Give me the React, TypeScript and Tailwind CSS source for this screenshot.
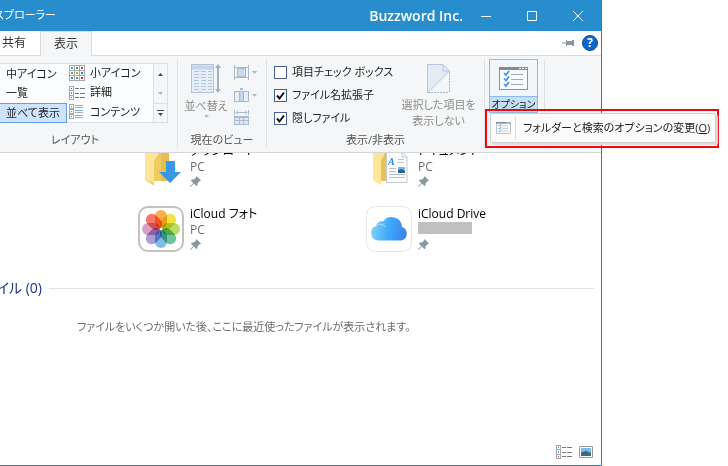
import type { ReactNode } from 'react';

function Pin({ flat = false }: { flat?: boolean }) {
  return flat ? (
    <svg width="12" height="8" viewBox="0 0 12 8" fill="#8b959e" aria-hidden="true">
      <path d="M0 3.5h4v1H0zM4 1h1v1h5V1h2v6h-2V6H5v1H4z" />
    </svg>
  ) : (
    <svg width="11" height="11" viewBox="0 0 11 11" fill="#8b979f" aria-hidden="true">
      <path d="M6.500 0 11 4.500 9.500 5.200 7.600 7.200 7.500 9.500 6.300 10 3.900 7.600.6 11 0 10.400 3.300 7 1 4.700 1.700 3.600 4 3.500 6 1.500z" />
    </svg>
  );
}

function Caret({ color = '#b3b8be' }: { color?: string }) {
  return (
    <svg width="5" height="3" viewBox="0 0 5 3" fill={color} aria-hidden="true">
      <path d="M0 0h5L2.500 3z" />
    </svg>
  );
}

function SmallIconsIcon() {
  const colors = ['#4f9be0', '#3f8f52', '#c9473c', '#6da85e', '#d0a030', '#3a70b8', '#3f80d0', '#4a9a4a', '#c2352a'];
  return (
    <svg width="16" height="16" viewBox="0 0 16 16" aria-hidden="true">
      {colors.map((c, i) => {
        const x = (i % 3) * 5;
        const y = Math.floor(i / 3) * 5;
        return (
          <g key={i}>
            <rect x={x + 0.5} y={y + 0.5} width="5" height="5" fill="#fff" stroke="#a5a9ae" />
            <rect x={x + 2} y={y + 2} width="2" height="2" fill={c} />
          </g>
        );
      })}
    </svg>
  );
}

function DetailsIcon() {
  return (
    <svg width="16" height="14" viewBox="0 0 16 14" aria-hidden="true">
      <rect x="0.5" y="0.5" width="4" height="13" fill="#fff" stroke="#a5a9ad" />
      <path d="M0 4.5h5M0 9.5h5" stroke="#a5a9ad" />
      <path fill="#3b6ea5" d="M2 2h1v1H2z" />
      <path fill="#3a9cf0" d="M2 6h1v2H2z" />
      <path fill="#d03030" d="M2 11h1v1H2z" />
      <path d="M6 2.5h4m1 0h5M6 7.5h4m1 0h5M6 11.5h4m1 0h5" stroke="#73777c" />
    </svg>
  );
}

function ContentsIcon() {
  return (
    <svg width="14" height="16" viewBox="0 0 14 16" aria-hidden="true">
      {['#4f9be0', '#5cae62', '#4f8fd6'].map((c, i) => (
        <g key={i}>
          <rect x="0.5" y={i * 5 + 0.5} width="4" height="4" fill="#fff" stroke="#a5a9ad" />
          <rect x="2" y={i * 5 + 2} width="1" height="1" fill={c} />
          <path d={`M6 ${i * 5 + 1.5}h8`} stroke="#7db0e6" />
          <path d={`M6 ${i * 5 + 3.5}h8`} stroke="#a9adb2" />
        </g>
      ))}
    </svg>
  );
}

function SortIcon() {
  return (
    <svg width="30" height="30" viewBox="0 0 30 30" aria-hidden="true">
      <rect x="0.5" y="0.5" width="22" height="28" fill="#e6eef8" stroke="#b4c3d9" />
      <path d="M1 3.5h21" stroke="#c5d4e8" strokeWidth="4" />
      {[7, 10, 13, 16, 19, 22, 25].map((y) => (
        <path key={y} d={`M3 ${y + 0.5}h5m2 0h5m2 0h4`} stroke="#b5c7df" />
      ))}
      <path d="M27 3v23" stroke="#9fb0c8" strokeWidth="2" />
      <path d="m27 0 3 4h-6zM27 29l3-4h-6z" fill="#9fb0c8" />
    </svg>
  );
}

function GroupIcon() {
  return (
    <svg width="15" height="15" viewBox="0 0 15 15" fill="none" stroke="#a9bad2" aria-hidden="true">
      <path d="M.5 0v15M14.5 0v15M1 2.5h13M1 12.5h13" />
      <rect x="3.5" y="3.5" width="8" height="8" fill="#cbd9eb" />
    </svg>
  );
}

function AddColumnsIcon() {
  return (
    <svg width="15" height="14" viewBox="0 0 15 14" fill="none" stroke="#a9bad2" aria-hidden="true">
      <rect x=".5" y="3.5" width="14" height="10" fill="#e6eef8" />
      <rect x="5.5" y="3.5" width="4" height="10" fill="#c5d4e8" />
      <path d="M7.5 0v2" strokeWidth="3" />
    </svg>
  );
}

function FitColumnsIcon() {
  return (
    <svg width="15" height="15" viewBox="0 0 15 15" fill="none" stroke="#a9bad2" aria-hidden="true">
      <path d="M.5 0v5M14.5 0v5M2 2.5h11M4 .5l-2 2 2 2M11 .5l2 2-2 2" />
      <rect x=".5" y="6.5" width="14" height="8" fill="#dde7f3" />
      <path d="M.5 7.5h14M.5 10.5h14M5.5 7v7M9.5 7v7" />
    </svg>
  );
}

function HideItemsIcon() {
  return (
    <svg width="24" height="30" viewBox="0 0 24 30" aria-hidden="true">
      <path d="M1 .5h15l6 6v1L1 28.5z" fill="#e3ebf5" />
      <path d="M.5 29V.5H16l6.5 6.5v1M1 28.5l21-21M16 .5V7h6.500" fill="none" stroke="#b8c8dd" />
      <path d="M22.500 8v21M1 28.500h21" stroke="#a3b7d3" strokeDasharray="2 1" />
    </svg>
  );
}

function OptionsIcon({ width, height }: { width: number; height: number }) {
  return (
    <svg width={width} height={height} viewBox="0 0 29 23" aria-hidden="true">
      <rect x=".5" y=".5" width="28" height="22" fill="#f8f9fb" stroke="#8f9499" />
      <path d="M0 0h29v3H0z" fill="#858a90" />
      <path d="M20 1h2v1h-2zm3 0h2v1h-2zm3 0h2v1h-2z" fill="#fff" />
      <path d="M12 7.500h12M12 12.500h12M12 17.500h12" stroke="#a5a9ad" />
      <path d="m5 6 2 2 3-4M5 11.500l2 2 3-4M5 17l2 2 3-4" fill="none" stroke="#3d8fdc" strokeWidth="1.600" />
    </svg>
  );
}

function DownloadsIcon() {
  return (
    <svg width="46" height="34" viewBox="0 0 46 34" aria-hidden="true">
      <path d="M16 0h15v28H16z" fill="#e5bd50" />
      <path d="M8 0h15v28H8z" fill="#efcb62" />
      <path d="M7 0h14l-5 8v24l-9-5z" fill="#ffe598" />
      <path d="m7 27 9 6v-4z" fill="#f4d477" />
      <path d="M28 8h9v11h6L32 30 21 19h7z" fill="#3b97e8" />
    </svg>
  );
}

function DocumentsIcon() {
  return (
    <svg width="46" height="34" viewBox="0 0 46 34" aria-hidden="true">
      <path d="M8 0h12v28H8z" fill="#e8c158" />
      <path d="M7 0h12l-4 8v24l-8-5z" fill="#ffe598" />
      <path d="M20.500 3.500V-1H36l5 5v25.500H20.500z" fill="#fbfcfd" stroke="#c5c9cd" />
      <path d="M36 0v4h5" fill="none" stroke="#c5c9cd" />
      <path d="M32 6.500h6M32 9.500h6M23 15.500h7M23 18.500h7M23 21.500h16M23 24.500h16" stroke="#b8c1c9" />
      <text x="22" y="12" fontSize="10" fontStyle="italic" fontWeight="700" fill="#2b8ad0" fontFamily="Liberation Serif, serif">A</text>
      <path d="M32 14h7v6h-7z" fill="#78b5e5" />
      <path d="m32 17 4-1 3 2v2h-7z" fill="#2b638f" />
    </svg>
  );
}

function PhotosIcon() {
  const petals = ['#f9a638', '#ece22c', '#b4d858', '#5fbd92', '#70b8e6', '#9c94d0', '#d696c2', '#f5685a'];
  return (
    <svg width="46" height="46" viewBox="0 0 46 46" aria-hidden="true">
      <rect x="1" y="1" width="44" height="44" rx="9" fill="#fff" stroke="#c2c2c2" strokeWidth="2" />
      {petals.map((c, i) => (
        <rect key={c} x="17" y="4" width="12" height="18" rx="6" fill={c} opacity="0.9" transform={`rotate(${i * 45} 23 23)`} className="mix-blend-multiply" />
      ))}
    </svg>
  );
}

function DriveIcon() {
  return (
    <svg width="46" height="46" viewBox="0 0 46 46" aria-hidden="true">
      <defs>
        <linearGradient id="cloud" x1="0" y1="0.500" x2="1" y2="0.600">
          <stop offset="0" stopColor="#7ed3fa" />
          <stop offset="0.500" stopColor="#3fa9f8" />
          <stop offset="1" stopColor="#3d7ff0" />
        </linearGradient>
      </defs>
      <rect x="0.500" y="0.500" width="45" height="45" rx="9" fill="#fff" stroke="#e6e6e6" />
      <path d="M12 34.500a7.500 7.500 0 0 1-2-14.500 5.500 5.500 0 0 1 7-4.500A10.500 10.500 0 0 1 36 21a7 7 0 0 1-1 13.500z" fill="url(#cloud)" />
      <path d="M10 20a5.500 5.500 0 0 1 9 1" fill="none" stroke="#a8e2fb" />
    </svg>
  );
}

function Group({ label, className, children }: { label: string; className: string; children: ReactNode }) {
  return (
    <section aria-label={label} className={`flex shrink-0 flex-col border-r border-[#dfe1e4] ${className}`}>
      <div className="flex h-[76px]">{children}</div>
      <div className="text-center leading-4 text-[#555]">{label}</div>
    </section>
  );
}

function Check({ label, checked }: { label: string; checked?: boolean }) {
  return (
    <label className="flex h-[23px] items-center gap-[5px] whitespace-nowrap text-[#222]">
      <span className="grid size-[13px]">
        <input type="checkbox" defaultChecked={checked} className="peer col-start-1 row-start-1 size-[13px] appearance-none border border-[#4a5f96] bg-white" />
        <svg viewBox="0 0 13 13" className="pointer-events-none invisible col-start-1 row-start-1 size-[13px] peer-checked:visible" aria-hidden="true">
          <path d="m3 6.500 2.500 3L10 3.500" fill="none" stroke="#111" strokeWidth="2" />
        </svg>
      </span>
      {label}
    </label>
  );
}

function Place({ name, sub, icon, hidden, clipped }: { name: string; sub?: string; icon: ReactNode; hidden?: boolean; clipped?: boolean }) {
  return (
    <li className={`flex gap-[6px] overflow-hidden ${clipped ? 'h-[34px] items-end' : 'h-[47px] items-start'}`}>
      {icon}
      <div className="flex flex-col whitespace-nowrap text-[12px] leading-4">
        <span className="text-black">{name}</span>
        {hidden ? <span className="mb-1 h-3 w-[54px] bg-[#c0c0c0]" /> : <span className="text-[#6d6d6d]">{sub}</span>}
        <span className="flex h-3 items-center"><Pin /></span>
      </div>
    </li>
  );
}

export default function App() {
  return (
    <div className="relative flex min-h-screen overflow-hidden bg-white pr-[126px] font-['Open_Sans','Noto_Sans_CJK_JP',sans-serif] text-[11px] [font-feature-settings:'palt']">
      <main className="flex min-w-0 flex-1 flex-col border-r border-b border-[#2b7fb8]">
        <header className="flex h-[31px] items-center bg-[#288dcc] text-white">
          <h1 className="flex w-[56px] justify-end overflow-hidden whitespace-nowrap">エクスプローラー</h1>
          <div className="ml-auto text-[14px] font-semibold">Buzzword Inc.</div>
          <div className="flex h-full w-[138px]">
            <button aria-label="最小化" className="grid flex-1 place-items-center">
              <svg width="10" height="10" stroke="#fff"><path d="M0 5.500h10" /></svg>
            </button>
            <button aria-label="最大化" className="grid flex-1 place-items-center">
              <svg width="10" height="10" stroke="#fff" fill="none"><path d="M.5.5h9v9h-9z" /></svg>
            </button>
            <button aria-label="閉じる" className="grid flex-1 place-items-center">
              <svg width="10" height="10" stroke="#fff"><path d="m0 0 10 10M10 0 0 10" /></svg>
            </button>
          </div>
        </header>

        <nav className="flex h-[25px] border-b border-[#dadbdc] text-[12px] text-[#333]">
          <button className="w-10 pr-[14px] text-right">共有</button>
          <button className="-mb-px w-[52px] border border-b-0 border-[#dadbdc] bg-[#f5f6f7]">表示</button>
          <div className="ml-auto flex items-center gap-2 pr-[3px]">
            <button aria-label="リボンの固定"><Pin flat /></button>
            <button aria-label="ヘルプ" className="size-4 rounded-full border border-[#0b4b9b] bg-[#0f66cc] text-[12px] leading-[14px] font-bold text-white">?</button>
          </div>
        </nav>

        <div className="flex h-[97px] border-b border-[#d5d7da] bg-[#f5f6f7] pt-[3px] pb-1">
          <Group label="レイアウト" className="w-[178px] pr-[27px]">
            <div className="mt-1 flex h-[60px] w-[168px] shrink-0 border border-l-0 border-[#dcdfe3] bg-[#fbfcfd] text-[#222]">
              <div className="flex w-[67px] flex-col whitespace-nowrap">
                <button className="h-[19px] pl-[6px] text-left leading-[19px]">中アイコン</button>
                <button className="h-5 pl-[6px] text-left leading-5">一覧</button>
                <button className="h-5 border border-l-0 border-[#62a2e4] bg-[#cce4ff] pl-[6px] text-left leading-[18px]">並べて表示</button>
              </div>
              <div className="flex flex-1 flex-col whitespace-nowrap pl-[2px]">
                <button className="flex h-[19px] items-center gap-[5px]"><SmallIconsIcon />小アイコン</button>
                <button className="flex h-5 items-center gap-[5px]"><DetailsIcon />詳細</button>
                <button className="flex h-5 items-center gap-[7px]"><ContentsIcon />コンテンツ</button>
              </div>
              <div className="flex w-[14px] flex-col border-l border-[#dcdfe3] bg-[#f5f6f7]">
                <button aria-label="上へ" className="grid h-5 place-items-center">
                  <svg width="5" height="3" fill="#3b4a63"><path d="M0 3h5L2.500 0z" /></svg>
                </button>
                <button aria-label="下へ" className="grid h-[19px] place-items-center">
                  <svg width="5" height="3" fill="#b3b8be"><path d="M0 0h5L2.500 3z" /></svg>
                </button>
                <button aria-label="その他" className="grid h-[19px] place-items-center border-t border-[#dcdfe3]">
                  <svg width="7" height="6" fill="#3b4a63"><path d="M0 0h7v1H0zM1 3h5L3.500 6z" /></svg>
                </button>
              </div>
            </div>
          </Group>

          <Group label="現在のビュー" className="w-[89px]">
            <button className="flex w-[56px] flex-col items-center whitespace-nowrap pt-[5px] text-[#8b8b8b]">
              <SortIcon />
              <span className="mt-[3px] leading-[18px]">並べ替え</span>
              <Caret />
            </button>
            <div className="flex flex-col gap-2 pt-[6px]">
              <button aria-label="グループ化" className="flex items-center gap-[3px]"><GroupIcon /><Caret /></button>
              <button aria-label="列の追加" className="flex items-center gap-[3px]"><AddColumnsIcon /><Caret /></button>
              <button aria-label="列のサイズを変更する"><FitColumnsIcon /></button>
            </div>
          </Group>

          <Group label="表示/非表示" className="w-[218px]">
            <div className="flex flex-1 flex-col pt-[2px] pl-[7px]">
              <Check label="項目チェック ボックス" />
              <Check label="ファイル名拡張子" checked />
              <Check label="隠しファイル" checked />
            </div>
            <button className="flex w-[92px] flex-col items-center pt-[5px] text-[#8b8b8b]">
              <HideItemsIcon />
              <span className="mt-[3px] leading-4 whitespace-nowrap">選択した項目を<br />表示しない</span>
            </button>
          </Group>

          <section className="w-[60px] border-r border-[#dfe1e4] pr-[6px] pl-1">
            <button className="flex h-[54px] w-full flex-col border border-[#88bdeb] bg-[#f1f6fb]">
              <span className="grid h-[37px] w-full place-items-center"><OptionsIcon width={29} height={23} /></span>
              <span className="w-full flex-1 border-t border-[#88bdeb] bg-[#c5dff7] text-center text-[10px] leading-[15px] whitespace-nowrap text-[#222]">オプション</span>
            </button>
          </section>
        </div>

        <ul className="grid grid-cols-[228px_228px] gap-y-[19px] overflow-hidden pl-[138px]">
          <Place clipped name="ダウンロード" sub="PC" icon={<DownloadsIcon />} />
          <Place clipped name="ドキュメント" sub="PC" icon={<DocumentsIcon />} />
          <Place name="iCloud フォト" sub="PC" icon={<PhotosIcon />} />
          <Place name="iCloud Drive" hidden icon={<DriveIcon />} />
        </ul>

        <div className="mt-[23px] flex items-center gap-[7px] pr-[7px]">
          <h2 className="flex w-[42px] justify-end overflow-hidden whitespace-nowrap text-[14px] leading-6 text-[#1e3287]">最近使用したファイル (0)</h2>
          <hr className="flex-1 border-[#e2e2e2]" />
        </div>
        <p className="mt-[17px] pl-[77px] leading-5 text-[#6d6d6d]">ファイルをいくつか開いた後、ここに最近使ったファイルが表示されます。</p>

        <footer className="mt-auto flex items-center justify-end gap-[7px] pr-2 pb-[6px]">
          <button aria-label="詳細表示"><DetailsIcon /></button>
          <button aria-label="大アイコン表示">
            <svg width="14" height="12" viewBox="0 0 14 12">
              <path d="M.5.500h13v11H.5z" fill="#fff" stroke="#9a9a9a" />
              <path d="M2 2h10v8H2z" fill="#7eb6ee" />
              <path d="M2 6.500 7 5l5 2v3H2z" fill="#3c6a78" />
            </svg>
          </button>
        </footer>
      </main>

      <div className="absolute top-[109px] left-[485px] h-[39px] w-[234px] border-2 border-[#f00810] p-[2px] pl-[3px]">
        <div role="menu" className="flex h-[30px] w-[226px] rounded-[2px] border border-[#d0d0d0] bg-[#fbfbfc] shadow-[2px_2px_1px_#dedede]">
          <button role="menuitem" className="flex flex-1 items-center whitespace-nowrap text-[#222]">
            <span className="grid h-6 w-[25px] place-items-center border-r border-[#dedfe1]"><OptionsIcon width={15} height={12} /></span>
            <span className="pl-[7px]">フォルダーと検索のオプションの変更(<u>O</u>)</span>
          </button>
        </div>
      </div>
    </div>
  );
}
